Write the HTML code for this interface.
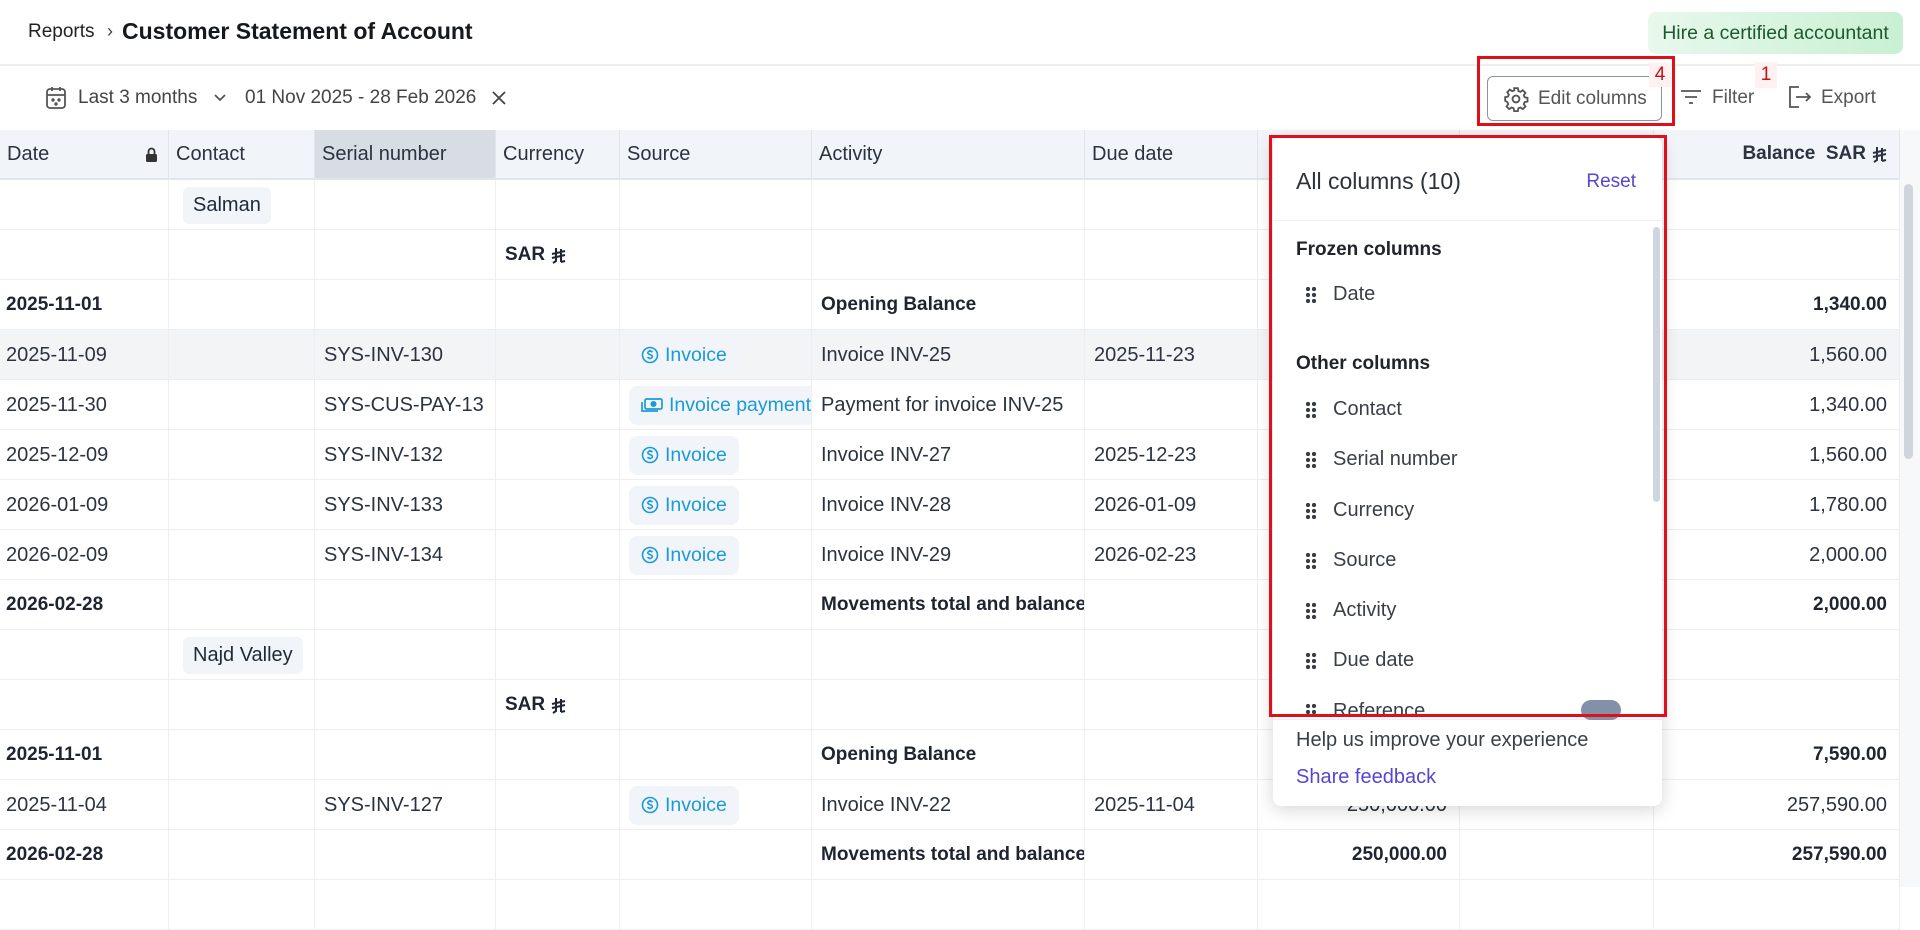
<!DOCTYPE html>
<html><head><meta charset="utf-8"><style>
*{box-sizing:border-box;margin:0;padding:0}
body{width:1920px;height:887px;overflow:hidden;background:#fff;font-family:"Liberation Sans",sans-serif;color:#2b3340;position:relative}
.abs{position:absolute}
.hdr{top:0;left:0;width:1920px;height:66px;border-bottom:2px solid #eceef1}
.cell{position:absolute;height:50px;display:flex;align-items:center;font-size:20px;white-space:nowrap;border-right:1px solid #eceef1;overflow:hidden}
.row{position:absolute;left:0;width:1900px;height:50px;border-bottom:1px solid #eceef1}
.b{font-weight:bold;color:#1f2530;font-size:19px}
.r{justify-content:flex-end;padding-right:8px}
.chip{background:#f1f5f9;border-radius:6px;padding:7px 10px;color:#1f2937}
.src{background:#f1f5f9;border-radius:8px;padding:8px 12px 8px 12px;color:#1a9ad6;display:flex;align-items:center;gap:6px;font-size:19.5px}
.th{position:absolute;top:130px;height:50px;display:flex;align-items:center;font-size:20px;background:#f1f4f8;border-right:1px solid #e2e6ec;border-bottom:2px solid #e2e6ec;padding-left:7px;color:#2b3340}
.pi{position:absolute;left:1305px;display:flex;align-items:center;font-size:20px;color:#3a3f47}
.dots{width:12px;height:18px;margin-right:16px;background-image:radial-gradient(circle,#3a3f47 2px,transparent 2.3px);background-size:6px 6px;background-position:0 0}
.ry{display:inline-block;vertical-align:middle;margin-left:6px}
</style></head><body>
<div class="abs hdr"></div>
<div class="abs" style="left:28px;top:21px;font-size:19px;color:#222">Reports</div>
<div class="abs" style="left:107px;top:21px;font-size:18px;color:#444">›</div>
<div class="abs" style="left:122px;top:18px;font-size:23px;font-weight:bold;color:#15181d">Customer Statement of Account</div>
<div class="abs" style="left:1648px;top:12px;width:255px;height:42px;border-radius:8px;background:linear-gradient(90deg,#e8f8ec,#c9f0d2);font-size:19.5px;color:#1c5a2e;display:flex;align-items:center;justify-content:center">Hire a certified accountant</div>

<svg class="abs" style="left:45px;top:86px" width="22" height="24" viewBox="0 0 22 24" fill="none" stroke="#555" stroke-width="1.8"><rect x="2" y="3" width="18" height="19" rx="3"/><path d="M2 9h18M7 1v4M15 1v4"/><circle cx="8" cy="14" r=".8" fill="#555"/><circle cx="14" cy="14" r=".8" fill="#555"/><circle cx="11" cy="18" r=".8" fill="#555"/></svg>
<div class="abs" style="left:78px;top:87px;font-size:19px;color:#444">Last 3 months</div>
<svg class="abs" style="left:213px;top:91px" width="14" height="14" viewBox="0 0 14 14" fill="none" stroke="#555" stroke-width="1.8"><path d="M2 4l5 5 5-5"/></svg>
<div class="abs" style="left:245px;top:87px;font-size:19px;color:#444">01 Nov 2025 - 28 Feb 2026</div>
<svg class="abs" style="left:491px;top:90px" width="16" height="16" viewBox="0 0 16 16" stroke="#444" stroke-width="1.8"><path d="M2 2l12 12M14 2L2 14"/></svg>

<div class="abs" style="left:1487px;top:76px;width:175px;height:45px;border:1.5px solid #8a94a6;border-radius:6px;display:flex;align-items:center;padding-left:15px;font-size:19px;color:#555">
<svg width="26" height="26" viewBox="0 0 24 24" fill="none" stroke="#555" stroke-width="1.7" style="margin-right:9px"><circle cx="12" cy="12" r="3.2"/><path d="M10.3 2h3.4l.5 2.6 1.9.8 2.2-1.5 2.4 2.4-1.5 2.2.8 1.9 2.6.5v3.4l-2.6.5-.8 1.9 1.5 2.2-2.4 2.4-2.2-1.5-1.9.8-.5 2.6h-3.4l-.5-2.6-1.9-.8-2.2 1.5-2.4-2.4 1.5-2.2-.8-1.9L2 13.7v-3.4l2.6-.5.8-1.9-1.5-2.2 2.4-2.4 2.2 1.5 1.9-.8z"/></svg>Edit columns</div>
<div class="abs" style="left:1649px;top:63px;width:22px;height:24px;background:#fff1f1;color:#c01515;font-size:19px;text-align:center;line-height:24px">4</div>
<div class="abs" style="left:1477px;top:56px;width:198px;height:70px;border:3px solid #e0101a"></div>
<svg class="abs" style="left:1680px;top:88px" width="22" height="18" viewBox="0 0 22 18" stroke="#555" stroke-width="1.8"><path d="M1 3h20M5 9h12M9 15h4"/></svg>
<div class="abs" style="left:1712px;top:87px;font-size:19px;color:#555">Filter</div>
<div class="abs" style="left:1755px;top:62px;width:22px;height:26px;background:#fff1f1;color:#c01515;font-size:19px;text-align:center;line-height:26px">1</div>
<svg class="abs" style="left:1787px;top:85px" width="26" height="24" viewBox="0 0 26 24" fill="none" stroke="#555" stroke-width="1.8"><path d="M12 2H3v20h9M9 12h14M19 8l4 4-4 4"/></svg>
<div class="abs" style="left:1821px;top:87px;font-size:19px;color:#555">Export</div>

<div class="th" style="left:0;width:169px">Date<svg style="position:absolute;left:145px;top:17px" width="13" height="16" viewBox="0 0 13 16"><rect x="1" y="7" width="11" height="8" rx="1.5" fill="#333"/><path d="M3.5 7V4.5a3 3 0 0 1 6 0V7" fill="none" stroke="#333" stroke-width="1.8"/></svg></div>
<div class="th" style="left:169px;width:146px">Contact</div>
<div class="th" style="left:315px;width:181px;background:#d8dce3">Serial number</div>
<div class="th" style="left:496px;width:124px">Currency</div>
<div class="th" style="left:620px;width:192px">Source</div>
<div class="th" style="left:812px;width:273px">Activity</div>
<div class="th" style="left:1085px;width:173px">Due date</div>
<div class="th" style="left:1258px;width:202px"></div>
<div class="th" style="left:1460px;width:194px"></div>
<div class="th" style="left:1654px;width:246px;justify-content:flex-end;padding-right:12px;color:#2b3340;font-weight:bold;font-size:19px">Balance&nbsp; SAR<svg class="ry" width="15" height="17" viewBox="0 0 15 17" fill="none" stroke="#2b3340" stroke-width="2"><path d="M5 1v13l-3 2M10 2v13M1 7l13-3M1 11l13-3M10 15l4-1"/></svg></div>
<div class="abs" style="left:1900px;top:130px;width:20px;height:757px;background:#f7f8fa"></div>
<div class="abs" style="left:1904px;top:184px;width:9px;height:275px;border-radius:5px;background:#d0d5dc"></div>

<div id="rows"></div>
<script>
const cols=[0,169,315,496,620,812,1085,1258,1460,1654,1900];
const inv='<svg width="18" height="18" viewBox="0 0 18 18" fill="none" stroke="#1a9ad6" stroke-width="1.6"><circle cx="9" cy="9" r="7.5"/><path d="M11.3 6.3c-.4-.8-1.3-1.2-2.3-1.2-1.3 0-2.2.7-2.2 1.7 0 2.3 4.6 1.3 4.6 3.7 0 1-1 1.8-2.4 1.8-1.1 0-2-.5-2.4-1.3M9 3.8v1.3M9 12v1.4"/></svg>';
const pay='<svg width="22" height="16" viewBox="0 0 22 16" fill="none" stroke="#1a9ad6" stroke-width="1.7"><rect x="4" y="2" width="17" height="10" rx="1.5"/><circle cx="12.5" cy="7" r="2.2" fill="#1a9ad6"/><path d="M1 5v9h16"/></svg>';
const ry='<svg class="ry" width="15" height="17" viewBox="0 0 15 17" fill="none" stroke="#1f2530" stroke-width="2"><path d="M5 1v13l-3 2M10 2v13M1 7l13-3M1 11l13-3M10 15l4-1"/></svg>';
const S=(t,ic)=>`<span class="src">${ic}${t}</span>`;
const rows=[
 ['','<span class="chip">Salman</span>'],
 ['','','','<b class="b">SAR</b>'+ry],
 ['2025-11-01','','','','','Opening Balance','','','','1,340.00','B'],
 ['2025-11-09','','SYS-INV-130','',S('Invoice',inv),'Invoice INV-25','2025-11-23','','','1,560.00','H'],
 ['2025-11-30','','SYS-CUS-PAY-13','',S('Invoice payment',pay),'Payment for invoice INV-25','','','','1,340.00'],
 ['2025-12-09','','SYS-INV-132','',S('Invoice',inv),'Invoice INV-27','2025-12-23','','','1,560.00'],
 ['2026-01-09','','SYS-INV-133','',S('Invoice',inv),'Invoice INV-28','2026-01-09','','','1,780.00'],
 ['2026-02-09','','SYS-INV-134','',S('Invoice',inv),'Invoice INV-29','2026-02-23','','','2,000.00'],
 ['2026-02-28','','','','','Movements total and balance','','','','2,000.00','B'],
 ['','<span class="chip">Najd Valley</span>'],
 ['','','','<b class="b">SAR</b>'+ry],
 ['2025-11-01','','','','','Opening Balance','','','','7,590.00','B'],
 ['2025-11-04','','SYS-INV-127','',S('Invoice',inv),'Invoice INV-22','2025-11-04','250,000.00','','257,590.00'],
 ['2026-02-28','','','','','Movements total and balance','','250,000.00','','257,590.00','B'],
 ['']
];
let h='';
rows.forEach((r,i)=>{
 const top=180+i*50;const f=r[10];
 h+=`<div class="row" style="top:${top}px;${f=='H'?'background:#f3f4f6':''}"></div>`;
 for(let c=0;c<10;c++){
  let t=r[c]||'';
  const right=c>=7;
  const bold=(f=='B'&&(c==0||c==5||c>=7));
  const pad=c==4?'padding-left:9px':(right?'':'padding-left:'+(c==0?6:c==1?14:9)+'px');
  h+=`<div class="cell${right?' r':''}${bold?' b':''}" style="top:${top}px;left:${cols[c]}px;width:${cols[c+1]-cols[c]}px;${pad};${right?'padding-right:12px':''}">${t}</div>`;
 }
});
document.getElementById('rows').innerHTML=h;
</script>

<div class="abs" style="left:1273px;top:137px;width:389px;height:669px;background:#fff;border-radius:8px;box-shadow:0 4px 18px rgba(0,0,0,.16);overflow:hidden">
 <div class="abs" style="left:23px;top:31px;font-size:23px;color:#2d323a">All columns (10)</div>
 <div class="abs" style="right:26px;top:34px;font-size:19px;color:#5646d0">Reset</div>
 <div class="abs" style="left:0;top:83px;width:389px;height:1px;background:#eceef1"></div>
 <div class="abs" style="left:380px;top:90px;width:7px;height:275px;border-radius:4px;background:#cfd6df"></div>
 <div class="abs" style="left:23px;top:102px;font-size:19px;font-weight:bold;color:#20242b">Frozen columns</div>
 <div class="abs" style="left:23px;top:216px;font-size:19px;font-weight:bold;color:#20242b">Other columns</div>
 <div class="abs" style="left:0;top:582px;width:389px;height:1px;background:#eceef1"></div>
 <div class="abs" style="left:23px;top:592px;font-size:20px;color:#3a3f47">Help us improve your experience</div>
 <div class="abs" style="left:23px;top:629px;font-size:20px;color:#5646d0">Share feedback</div>
 <div class="abs" style="left:308px;top:563px;width:40px;height:20px;border-radius:10px;background:#8290a8;overflow:hidden"></div>
</div>
<div class="pi" style="top:283px"><span class="dots"></span>Date</div>
<div class="pi" style="top:398px"><span class="dots"></span>Contact</div>
<div class="pi" style="top:448px"><span class="dots"></span>Serial number</div>
<div class="pi" style="top:499px"><span class="dots"></span>Currency</div>
<div class="pi" style="top:549px"><span class="dots"></span>Source</div>
<div class="pi" style="top:599px"><span class="dots"></span>Activity</div>
<div class="pi" style="top:649px"><span class="dots"></span>Due date</div>
<div class="abs" style="left:1273px;top:700px;width:389px;height:14px;overflow:hidden"><div class="pi" style="left:32px;top:0"><span class="dots"></span>Reference</div></div>
<div class="abs" style="left:1269px;top:135px;width:398px;height:582px;border:3px solid #e0101a"></div>
</body></html>
